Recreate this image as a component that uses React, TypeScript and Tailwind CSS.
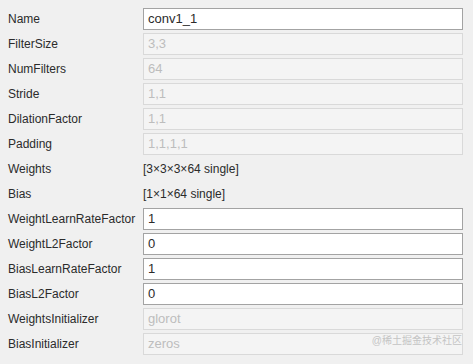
type Row = {
  label: string;
  value: string;
  kind: 'edit' | 'off' | 'text';
};

const rows: Row[] = [
  { label: 'Name', value: 'conv1_1', kind: 'edit' },
  { label: 'FilterSize', value: '3,3', kind: 'off' },
  { label: 'NumFilters', value: '64', kind: 'off' },
  { label: 'Stride', value: '1,1', kind: 'off' },
  { label: 'DilationFactor', value: '1,1', kind: 'off' },
  { label: 'Padding', value: '1,1,1,1', kind: 'off' },
  { label: 'Weights', value: '[3×3×3×64 single]', kind: 'text' },
  { label: 'Bias', value: '[1×1×64 single]', kind: 'text' },
  { label: 'WeightLearnRateFactor', value: '1', kind: 'edit' },
  { label: 'WeightL2Factor', value: '0', kind: 'edit' },
  { label: 'BiasLearnRateFactor', value: '1', kind: 'edit' },
  { label: 'BiasL2Factor', value: '0', kind: 'edit' },
  { label: 'WeightsInitializer', value: 'glorot', kind: 'off' },
  { label: 'BiasInitializer', value: 'zeros', kind: 'off' },
];

function Field({ row }: { row: Row }) {
  if (row.kind === 'text') {
    return <div className="flex h-[22px] items-center text-[12px] text-[#2b2b2b]">{row.value}</div>;
  }
  const box =
    row.kind === 'edit'
      ? 'border-[#a3a3a3] bg-white text-[#2b2b2b]'
      : 'border-[#d9d9d9] bg-[#f4f4f4] text-[#bdbdbd]';
  return (
    <div className={`flex h-[22px] items-center border px-[4px] text-[13px] ${box}`}>
      {row.value}
    </div>
  );
}

export default function App() {
  return (
    <div
      className="relative h-[364px] w-[473px] bg-[#f0f0f0] pt-[8px]"
      style={{ fontFamily: '"Liberation Sans", Arial, sans-serif' }}
    >
      <div className="flex flex-col gap-[3px]">
        {rows.map((r) => (
          <div key={r.label} className="grid grid-cols-[143px_320px] items-center">
            <div className="pl-[8px] text-[12px] text-[#2b2b2b]">{r.label}</div>
            <Field row={r} />
          </div>
        ))}
      </div>
      <div
        className="absolute right-[11px] top-[333px] text-[10px] text-[#c4c4c4]"
        style={{ fontFamily: '"Liberation Sans", "Noto Sans CJK SC", sans-serif' }}
      >
        @稀土掘金技术社区
      </div>
    </div>
  );
}
